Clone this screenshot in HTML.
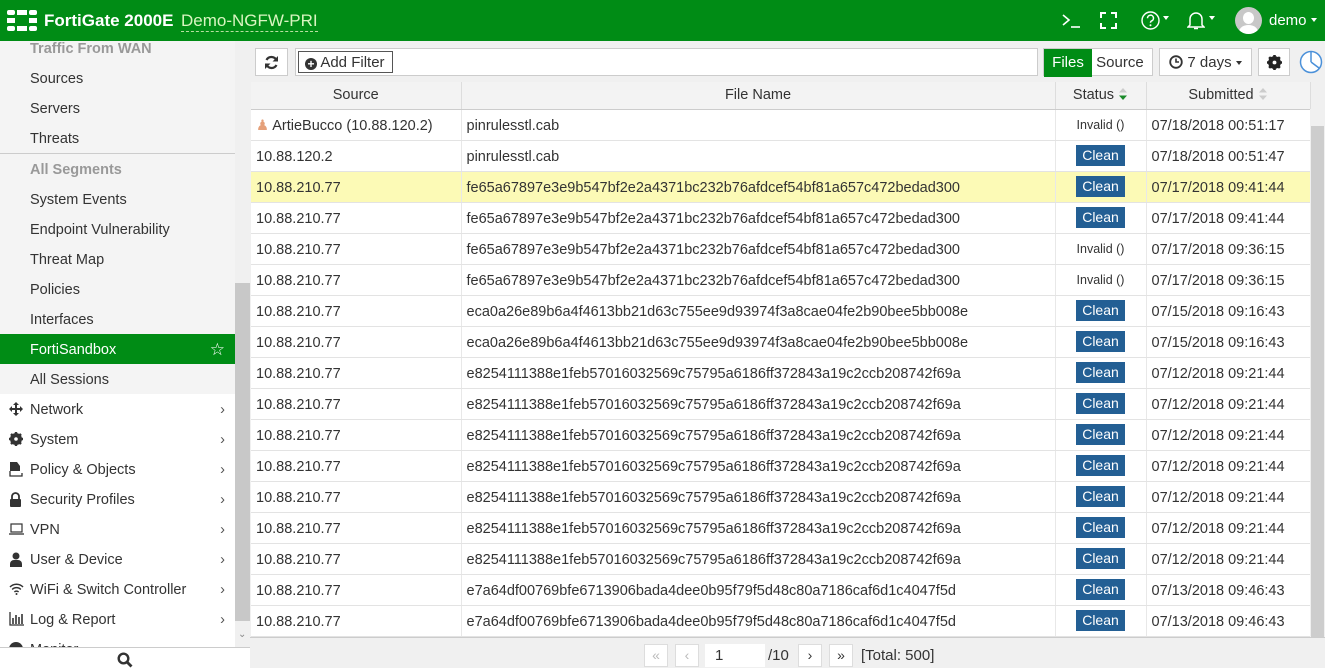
<!DOCTYPE html>
<html><head><meta charset="utf-8"><style>
*{box-sizing:border-box;margin:0;padding:0}
body{width:1325px;height:668px;overflow:hidden;font-family:"Liberation Sans",sans-serif;font-size:14px;color:#333;background:#fff;position:relative}
.top{position:absolute;left:0;top:0;width:1325px;height:41px;background:#008c15;color:#fff}
.side{position:absolute;left:0;top:41px;width:235px;height:606px;background:#f4f4f4;overflow:hidden}
.si{position:absolute;left:0;width:235px;height:30px;line-height:32px;padding-left:30px;font-size:14.5px;color:#333}
.si .ar{position:absolute;right:10px;top:0;color:#555}
.si .i{position:absolute;left:8px;top:0;width:16px;text-align:center;font-size:13px}
.si svg{position:absolute;left:9px;top:8px}
.sb{position:absolute;left:235px;top:41px;width:15px;height:606px;background:#f0f0f0}
.main{position:absolute;left:250px;top:41px;width:1075px;height:627px;background:#f0f0f0}
table{border-collapse:collapse;position:absolute;left:251px;top:82px;width:1059px;table-layout:fixed}
th{height:27px;font-weight:normal;font-size:14.5px;background:#f3f3f3;border-right:1px solid #ddd;border-bottom:1px solid #ccc;color:#333}
td{height:31px;border-bottom:1px solid #e3e3e3;border-right:1px solid #e8e8e8;padding-left:5px;padding-top:2px;font-size:14.5px;white-space:nowrap;overflow:hidden;background:#fff}
tr.hl td{background:#fcfab6}
.st{text-align:center;padding:0}
.cl{display:inline-block;background:#235f94;color:#fff;padding:0 6px;height:21px;line-height:21px;font-size:14px}
.inv{font-size:12.5px}
.btn{position:absolute;background:#fff;border:1px solid #ccc;height:28px;top:48px;line-height:28px;font-size:15px;text-align:center}
</style></head><body>
<div class="top">
 <svg style="position:absolute;left:7px;top:10px" width="30" height="21" viewBox="0 0 30 21"><g fill="#fff"><rect x="0" y="0" width="8" height="5" rx="2"/><rect x="10" y="0" width="10" height="5"/><rect x="22" y="0" width="8" height="5" rx="2"/><rect x="0" y="8" width="8" height="5"/><rect x="22" y="8" width="8" height="5"/><rect x="0" y="16" width="8" height="5" rx="2"/><rect x="10" y="16" width="10" height="5"/><rect x="22" y="16" width="8" height="5" rx="2"/></g></svg>
 <div style="position:absolute;left:44px;top:11px;font-size:17px;font-weight:bold">FortiGate 2000E</div>
 <div style="position:absolute;left:181px;top:11px;font-size:17px;color:#d8f5c0;border-bottom:1px dashed #b8e0a0">Demo-NGFW-PRI</div>
 <svg style="position:absolute;left:1062px;top:13px" width="20" height="16" viewBox="0 0 20 16"><path d="M1 2l6 5-6 5" fill="none" stroke="#fff" stroke-width="1.6"/><path d="M9 14h9" stroke="#fff" stroke-width="1.6"/></svg>
 <svg style="position:absolute;left:1100px;top:12px" width="17" height="17" viewBox="0 0 17 17"><path d="M1 6V1h5M11 1h5v5M16 11v5h-5M6 16H1v-5" fill="none" stroke="#fff" stroke-width="2"/></svg>
 <svg style="position:absolute;left:1141px;top:11px" width="19" height="19" viewBox="0 0 19 19"><circle cx="9.5" cy="9.5" r="8.5" fill="none" stroke="#fff" stroke-width="1.4"/><path d="M6.5 7.2a3 3 0 1 1 4 2.8c-.8.4-1 .9-1 1.8" fill="none" stroke="#fff" stroke-width="1.5"/><circle cx="9.5" cy="14.3" r="1" fill="#fff"/></svg>
 <div style="position:absolute;left:1163px;top:16px;border:3.5px solid transparent;border-top:4px solid #fff"></div>
 <svg style="position:absolute;left:1187px;top:11px" width="18" height="19" viewBox="0 0 18 19"><path d="M3 14V8a6 6 0 0 1 12 0v6l2 2H1z" fill="none" stroke="#fff" stroke-width="1.5"/><path d="M7 17.5h4" stroke="#fff" stroke-width="1.5"/></svg>
 <div style="position:absolute;left:1209px;top:16px;border:3.5px solid transparent;border-top:4px solid #fff"></div>
 <div style="position:absolute;left:1235px;top:7px;width:27px;height:27px;border-radius:50%;background:#c8c8c8;overflow:hidden"><div style="position:absolute;left:8px;top:5px;width:11px;height:12px;border-radius:50%;background:#fff"></div><div style="position:absolute;left:4px;top:18px;width:19px;height:14px;border-radius:50%;background:#fff"></div></div>
 <div style="position:absolute;left:1269px;top:12px;font-size:15px">demo</div>
 <div style="position:absolute;left:1311px;top:18px;border:3.5px solid transparent;border-top:4px solid #fff"></div>
</div>
<div class="side">
 <div class="si" style="top:-8px;color:#999;font-weight:bold">Traffic From WAN</div>
 <div class="si" style="top:22px">Sources</div>
 <div class="si" style="top:52px">Servers</div>
 <div class="si" style="top:82px">Threats</div>
 <div style="position:absolute;left:0;top:112px;width:235px;height:1px;background:#ccc"></div>
 <div class="si" style="top:113px;color:#999;font-weight:bold">All Segments</div>
 <div class="si" style="top:143px">System Events</div>
 <div class="si" style="top:173px">Endpoint Vulnerability</div>
 <div class="si" style="top:203px">Threat Map</div>
 <div class="si" style="top:233px">Policies</div>
 <div class="si" style="top:263px">Interfaces</div>
 <div class="si" style="top:293px;background:#008c15;color:#fff">FortiSandbox<span class="ar" style="font-size:17px;color:#fff">☆</span></div>
 <div class="si" style="top:323px">All Sessions</div>
 <div class="si" style="top:353px;background:#fff"><svg width="14" height="14" viewBox="0 0 14 14"><path d="M7 0l3 3H8v3h3V4l3 3-3 3V8H8v3h2l-3 3-3-3h2V8H3v2L0 7l3-3v2h3V3H4z" fill="#333"/></svg>Network<span class="ar">›</span></div>
 <div class="si" style="top:383px;background:#fff"><svg width="14" height="14" viewBox="0 0 14 14"><circle cx="7" cy="7" r="4.5" fill="none" stroke="#333" stroke-width="3"/><path d="M7 0v14M0 7h14M2 2l10 10M12 2L2 12" stroke="#333" stroke-width="2.4"/><circle cx="7" cy="7" r="1.8" fill="#fff"/></svg>System<span class="ar">›</span></div>
 <div class="si" style="top:413px;background:#fff"><svg width="14" height="15" viewBox="0 0 14 15"><path d="M1 0h7l3 4v5H1z" fill="#333"/><path d="M1 9v5h12v-3" fill="none" stroke="#333" stroke-width="1.3"/></svg>Policy &amp; Objects<span class="ar">›</span></div>
 <div class="si" style="top:443px;background:#fff"><svg width="13" height="15" viewBox="0 0 13 15"><path d="M3 7V4.5a3.5 3.5 0 0 1 7 0V7" fill="none" stroke="#333" stroke-width="1.8"/><rect x="1" y="7" width="11" height="8" rx="1" fill="#333"/></svg>Security Profiles<span class="ar">›</span></div>
 <div class="si" style="top:473px;background:#fff"><svg width="15" height="14" viewBox="0 0 15 14"><rect x="2" y="2" width="11" height="8" fill="none" stroke="#333" stroke-width="1.2"/><path d="M0 12h15" stroke="#333" stroke-width="1.3"/></svg>VPN<span class="ar">›</span></div>
 <div class="si" style="top:503px;background:#fff"><svg width="14" height="15" viewBox="0 0 14 15"><circle cx="7" cy="4" r="3.5" fill="#333"/><path d="M1 15v-3a4 4 0 0 1 4-4h4a4 4 0 0 1 4 4v3z" fill="#333"/></svg>User &amp; Device<span class="ar">›</span></div>
 <div class="si" style="top:533px;background:#fff"><svg width="15" height="13" viewBox="0 0 15 13"><path d="M1 5a9 9 0 0 1 13 0M3.2 7.5a6 6 0 0 1 8.6 0M5.4 10a3 3 0 0 1 4.2 0" fill="none" stroke="#333" stroke-width="1.5"/><circle cx="7.5" cy="12" r="1" fill="#333"/></svg>WiFi &amp; Switch Controller<span class="ar">›</span></div>
 <div class="si" style="top:563px;background:#fff"><svg width="15" height="14" viewBox="0 0 15 14"><path d="M1 0v13h14" fill="none" stroke="#333" stroke-width="1.3"/><path d="M4 6v6M7 3v9M10 5v7M13 2v10" stroke="#333" stroke-width="1.6"/></svg>Log &amp; Report<span class="ar">›</span></div>
 <div class="si" style="top:593px;background:#fff"><svg width="14" height="14" viewBox="0 0 14 14"><circle cx="7" cy="7" r="7" fill="#333"/></svg>Monitor<span class="ar">›</span></div>
</div>
<div class="sb"><div style="position:absolute;left:0;top:242px;width:15px;height:338px;background:#c8c8c8"></div><div style="position:absolute;left:3px;top:588px;font-size:10px;color:#888">⌄</div></div>
<div style="position:absolute;left:0;top:647px;width:250px;height:21px;background:#fff;border-top:1px solid #ccc"><svg style="position:absolute;left:117px;top:4px" width="16" height="16" viewBox="0 0 16 16"><circle cx="6.5" cy="6.5" r="4.8" fill="none" stroke="#333" stroke-width="2.4"/><path d="M10 10l4.5 4.5" stroke="#333" stroke-width="2.8"/></svg></div>
<div class="main"></div>
<div class="btn" style="left:255px;width:33px"><svg style="margin-top:6px" width="15" height="15" viewBox="0 0 15 15"><path d="M12.5 5.5A5.5 5.5 0 0 0 2.5 5M2.5 9.5a5.5 5.5 0 0 0 10 .5" fill="none" stroke="#333" stroke-width="2.2"/><path d="M14 1v5.5H8.5zM1 14V8.5h5.5z" fill="#333"/></svg></div>
<div style="position:absolute;left:295px;top:48px;width:743px;height:28px;background:#fff;border:1px solid #ccc"></div>
<div style="position:absolute;left:298px;top:51px;width:95px;height:22px;border:1px solid #555;background:#fff;font-size:15px;line-height:22px;padding-left:6px"><span style="display:inline-block;width:12px;height:12px;border-radius:50%;background:#333;color:#fff;font-size:12px;line-height:12px;text-align:center;font-weight:bold;vertical-align:-1px">+</span> Add Filter</div>
<div class="btn" style="left:1043px;width:110px;text-align:left"><span style="display:inline-block;background:#008c15;color:#fff;width:48px;text-align:center">Files</span> Source</div>
<div class="btn" style="left:1159px;width:93px"><svg style="vertical-align:-2px" width="14" height="14" viewBox="0 0 14 14"><circle cx="7" cy="7" r="5.8" fill="none" stroke="#333" stroke-width="1.8"/><path d="M7 3.5V7h3" fill="none" stroke="#333" stroke-width="1.6"/></svg> 7 days <span style="display:inline-block;border:3.5px solid transparent;border-top:4px solid #333;vertical-align:-1px"></span></div>
<div class="btn" style="left:1258px;width:32px"><svg style="margin-top:6px" width="15" height="15" viewBox="0 0 14 14"><circle cx="7" cy="7" r="4.5" fill="none" stroke="#222" stroke-width="3"/><path d="M7 0v14M0 7h14M2 2l10 10M12 2L2 12" stroke="#222" stroke-width="2.4"/><circle cx="7" cy="7" r="1.8" fill="#fff"/></svg></div>
<svg style="position:absolute;left:1299px;top:50px" width="24" height="24" viewBox="0 0 24 24"><circle cx="12" cy="12" r="10.5" fill="#fff" stroke="#4a90d9" stroke-width="1.5"/><path d="M12 12V1.5M12 12l8 6" stroke="#4a90d9" stroke-width="1.5"/></svg>
<table>
<colgroup><col style="width:210px"><col style="width:594px"><col style="width:91px"><col style="width:164px"></colgroup>
<tr><th>Source</th><th>File Name</th><th>Status <svg width="10" height="12" viewBox="0 0 10 12" style="vertical-align:-1px"><path d="M5 0l4 4.5H1z" fill="#ccc"/><path d="M5 12l4-4.5H1z" fill="#1a8a2a"/></svg></th><th>Submitted <svg width="10" height="12" viewBox="0 0 10 12" style="vertical-align:-1px"><path d="M5 0l4 4.5H1zM5 12l4-4.5H1z" fill="#ccc"/></svg></th></tr>
<tr><td><span style="color:#e5a07a">♟</span> ArtieBucco (10.88.120.2)</td><td>pinrulesstl.cab</td><td class="st"><span class="inv">Invalid ()</span></td><td>07/18/2018 00:51:17</td></tr>
<tr><td>10.88.120.2</td><td>pinrulesstl.cab</td><td class="st"><span class="cl">Clean</span></td><td>07/18/2018 00:51:47</td></tr>
<tr class="hl"><td>10.88.210.77</td><td>fe65a67897e3e9b547bf2e2a4371bc232b76afdcef54bf81a657c472bedad300</td><td class="st"><span class="cl">Clean</span></td><td>07/17/2018 09:41:44</td></tr>
<tr><td>10.88.210.77</td><td>fe65a67897e3e9b547bf2e2a4371bc232b76afdcef54bf81a657c472bedad300</td><td class="st"><span class="cl">Clean</span></td><td>07/17/2018 09:41:44</td></tr>
<tr><td>10.88.210.77</td><td>fe65a67897e3e9b547bf2e2a4371bc232b76afdcef54bf81a657c472bedad300</td><td class="st"><span class="inv">Invalid ()</span></td><td>07/17/2018 09:36:15</td></tr>
<tr><td>10.88.210.77</td><td>fe65a67897e3e9b547bf2e2a4371bc232b76afdcef54bf81a657c472bedad300</td><td class="st"><span class="inv">Invalid ()</span></td><td>07/17/2018 09:36:15</td></tr>
<tr><td>10.88.210.77</td><td>eca0a26e89b6a4f4613bb21d63c755ee9d93974f3a8cae04fe2b90bee5bb008e</td><td class="st"><span class="cl">Clean</span></td><td>07/15/2018 09:16:43</td></tr>
<tr><td>10.88.210.77</td><td>eca0a26e89b6a4f4613bb21d63c755ee9d93974f3a8cae04fe2b90bee5bb008e</td><td class="st"><span class="cl">Clean</span></td><td>07/15/2018 09:16:43</td></tr>
<tr><td>10.88.210.77</td><td>e8254111388e1feb57016032569c75795a6186ff372843a19c2ccb208742f69a</td><td class="st"><span class="cl">Clean</span></td><td>07/12/2018 09:21:44</td></tr>
<tr><td>10.88.210.77</td><td>e8254111388e1feb57016032569c75795a6186ff372843a19c2ccb208742f69a</td><td class="st"><span class="cl">Clean</span></td><td>07/12/2018 09:21:44</td></tr>
<tr><td>10.88.210.77</td><td>e8254111388e1feb57016032569c75795a6186ff372843a19c2ccb208742f69a</td><td class="st"><span class="cl">Clean</span></td><td>07/12/2018 09:21:44</td></tr>
<tr><td>10.88.210.77</td><td>e8254111388e1feb57016032569c75795a6186ff372843a19c2ccb208742f69a</td><td class="st"><span class="cl">Clean</span></td><td>07/12/2018 09:21:44</td></tr>
<tr><td>10.88.210.77</td><td>e8254111388e1feb57016032569c75795a6186ff372843a19c2ccb208742f69a</td><td class="st"><span class="cl">Clean</span></td><td>07/12/2018 09:21:44</td></tr>
<tr><td>10.88.210.77</td><td>e8254111388e1feb57016032569c75795a6186ff372843a19c2ccb208742f69a</td><td class="st"><span class="cl">Clean</span></td><td>07/12/2018 09:21:44</td></tr>
<tr><td>10.88.210.77</td><td>e8254111388e1feb57016032569c75795a6186ff372843a19c2ccb208742f69a</td><td class="st"><span class="cl">Clean</span></td><td>07/12/2018 09:21:44</td></tr>
<tr><td>10.88.210.77</td><td>e7a64df00769bfe6713906bada4dee0b95f79f5d48c80a7186caf6d1c4047f5d</td><td class="st"><span class="cl">Clean</span></td><td>07/13/2018 09:46:43</td></tr>
<tr><td>10.88.210.77</td><td>e7a64df00769bfe6713906bada4dee0b95f79f5d48c80a7186caf6d1c4047f5d</td><td class="st"><span class="cl">Clean</span></td><td>07/13/2018 09:46:43</td></tr>
</table>
<div style="position:absolute;left:1310px;top:109px;width:15px;height:529px;background:#f0f0f0"><div style="position:absolute;left:1px;top:17px;width:13px;height:512px;background:#cdcdcd"></div></div>
<div style="position:absolute;left:250px;top:637px;width:1075px;height:31px;background:#f0f0f0;border-top:1px solid #ccc"></div>
<div style="position:absolute;left:644px;top:644px;width:24px;height:23px;background:#fff;border:1px solid #ddd;color:#bbb;text-align:center;line-height:21px">«</div>
<div style="position:absolute;left:675px;top:644px;width:24px;height:23px;background:#fff;border:1px solid #ddd;color:#bbb;text-align:center;line-height:21px">‹</div>
<div style="position:absolute;left:705px;top:644px;width:60px;height:23px;background:#fff;line-height:24px;padding-left:10px;font-size:15px">1</div>
<div style="position:absolute;left:768px;top:647px;font-size:15px">/10</div>
<div style="position:absolute;left:798px;top:644px;width:24px;height:23px;background:#fff;border:1px solid #ddd;text-align:center;line-height:21px">›</div>
<div style="position:absolute;left:829px;top:644px;width:24px;height:23px;background:#fff;border:1px solid #ddd;text-align:center;line-height:21px">»</div>
<div style="position:absolute;left:861px;top:647px;font-size:15px">[Total: 500]</div>
</body></html>
